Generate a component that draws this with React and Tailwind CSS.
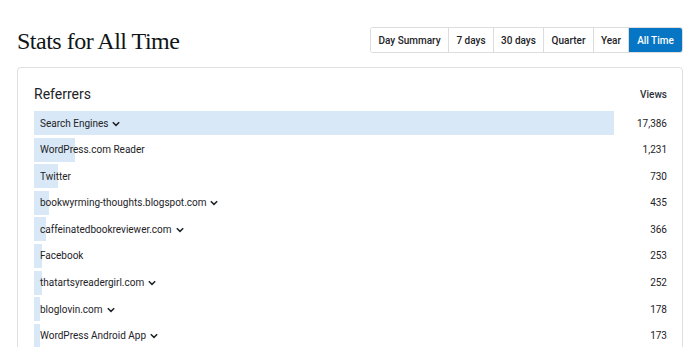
import React from 'react';

const tabs = [
    { label: 'Day Summary', w: 'w-[77px]' },
    { label: '7 days', w: 'w-[45px]' },
    { label: '30 days', w: 'w-[50px]' },
    { label: 'Quarter', w: 'w-[50px]' },
    { label: 'Year', w: 'w-[35px]' },
    { label: 'All Time', w: 'w-[54px]', active: true },
];

const referrers = [
    { name: 'Search Engines', views: 17386, expand: true },
    { name: 'WordPress.com Reader', views: 1231 },
    { name: 'Twitter', views: 730 },
    { name: 'bookwyrming-thoughts.blogspot.com', views: 435, expand: true },
    { name: 'caffeinatedbookreviewer.com', views: 366, expand: true },
    { name: 'Facebook', views: 253 },
    { name: 'thatartsyreadergirl.com', views: 252, expand: true },
    { name: 'bloglovin.com', views: 178, expand: true },
    { name: 'WordPress Android App', views: 173, expand: true },
];

const max = 17386;

function Chevron() {
    return (
        <svg width="8" height="6" viewBox="0 0 8 6" className="ml-[4px] mt-[1px]">
            <path d="M0.8 1.2 L4 4.4 L7.2 1.2" fill="none" stroke="#1d2327" strokeWidth="1.5" />
        </svg>
    );
}

export default function App() {
    return (
        <div className="w-[700px] h-[347px] overflow-hidden bg-white px-[17px] pt-[27px] text-[#2c3338] font-['Roboto',sans-serif]">
            <div className="flex items-center justify-between h-[26px]">
                <h1 className="font-['Liberation_Serif',serif] text-[24px] tracking-[-0.5px] text-[#101517] leading-none mt-[2px]">
                    Stats for All Time
                </h1>
                <div className="flex h-[26px] rounded-[3px] border border-[#dcdcde] overflow-hidden">
                    {tabs.map((t, i) => (
                        <div
                            key={t.label}
                            className={`${t.w} flex items-center justify-center text-[10px] font-medium ${i > 0 ? 'border-l border-[#dcdcde]' : ''} ${t.active ? 'bg-[#0675c4] text-white border-[#0675c4]' : 'bg-white text-[#1d2327]'}`}
                        >
                            {t.label}
                        </div>
                    ))}
                </div>
            </div>

            <div className="mt-[14px] border border-[#e0e0e0] rounded-[4px] pl-[16px] pr-[15px] h-[400px]">
                <div className="flex items-center justify-between pt-[16px] pb-[7px]">
                    <h2 className="text-[14px] leading-[20px] text-[#1d2327]">Referrers</h2>
                    <span className="text-[10px] font-medium text-[#2c3338]">Views</span>
                </div>
                <div className="flex flex-col gap-[2.6px]">
                    {referrers.map((r) => (
                        <div key={r.name} className="flex h-6">
                            <div className="relative w-[580px] flex items-center">
                                <div
                                    className="absolute inset-y-0 left-0 bg-[#d9e8f6]"
                                    style={{ width: `${(r.views / max) * 100}%` }}
                                />
                                <span className="relative pl-[6px] text-[10px] text-[#1d2327]">{r.name}</span>
                                {r.expand && <span className="relative flex"><Chevron /></span>}
                            </div>
                            <div className="flex-1 flex items-center justify-end text-[10px] text-[#1d2327]">
                                {r.views.toLocaleString('en-US')}
                            </div>
                        </div>
                    ))}
                </div>
            </div>
        </div>
    );
}
